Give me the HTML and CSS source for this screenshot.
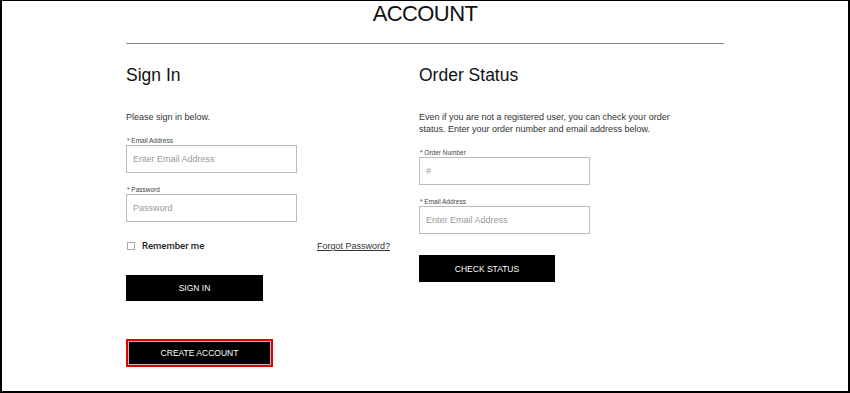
FILE: index.html
```html
<!DOCTYPE html>
<html lang="en">
  <head>
    <meta name="viewport" content="width=device-width, initial-scale=1.0" />
    <title>Account</title>
    <link rel="stylesheet" href="styles.css">
  </head>

  <body>
    <div class="page">
      <h1 class="title">ACCOUNT</h1>
      <div class="wrap">
        <hr class="rule" />
        <div class="columns">
          <!-- Sign in -->
          <div class="col sign-in">
            <h2>Sign In</h2>
            <p class="intro">Please sign in below.</p>
            <label class="field first">
              <span class="label">* Email Address</span>
              <input type="text" placeholder="Enter Email Address" />
            </label>
            <label class="field">
              <span class="label">* Password</span>
              <input type="password" placeholder="Password" />
            </label>
            <div class="remember-row">
              <span class="remember"><span class="box"></span>Remember me</span>
              <a href="#" class="forgot">Forgot Password?</a>
            </div>
            <button class="btn signin-btn">SIGN IN</button>
            <div class="create-outline">
              <button class="btn create-btn">CREATE ACCOUNT</button>
            </div>
          </div>

          <!-- Order status -->
          <div class="col order">
            <h2>Order Status</h2>
            <p class="intro">Even if you are not a registered user, you can check your order status. Enter your order number and email address below.</p>
            <label class="field first">
              <span class="label">* Order Number</span>
              <input type="text" placeholder="#" />
            </label>
            <label class="field">
              <span class="label">* Email Address</span>
              <input type="text" placeholder="Enter Email Address" />
            </label>
            <button class="btn check-btn">CHECK STATUS</button>
          </div>
        </div>
      </div>
    </div>
  </body>
</html>
```

FILE: styles.css
```css
* {
  padding: 0;
  margin: 0;
  box-sizing: border-box;
  font-family: "Liberation Sans", Arial, sans-serif;
}

body {
  background-color: #ffffff;
}

.page {
  width: 850px;
  height: 393px;
  border: 2px solid #000;
  border-top-width: 1px;
  overflow: hidden;
}

.title {
  font-size: 22px;
  line-height: 25px;
  font-weight: normal;
  text-align: center;
  color: #111;
  letter-spacing: -0.6px;
}

.wrap {
  width: 598px;
  margin-left: 124px;
}

.rule {
  border: none;
  height: 1px;
  background-color: #888;
  margin-top: 17px;
}

.columns {
  display: grid;
  grid-template-columns: 293px 1fr;
}

.col {
  display: flex;
  flex-direction: column;
  align-items: flex-start;
}

.col h2 {
  font-size: 17.5px;
  line-height: 22px;
  font-weight: normal;
  color: #111;
  margin-top: 20px;
}

.intro {
  font-size: 9px;
  line-height: 12px;
  color: #333;
  margin-top: 25px;
}

.order .intro {
  max-width: 270px;
}

.field {
  display: flex;
  flex-direction: column;
  margin-top: 11.5px;
}

.field.first {
  margin-top: 12.5px;
}

.label {
  font-size: 6.5px;
  line-height: 9px;
  color: #444;
  padding-left: 1px;
}

.field input {
  margin-top: 0.5px;
  width: 171px;
  height: 28px;
  border: 1px solid #bbb;
  padding: 0 6px;
  font-size: 9px;
  color: #333;
  outline: none;
}

.field input::placeholder {
  color: #999;
}

.remember-row {
  margin-top: 18px;
  width: 264px;
  display: flex;
  justify-content: space-between;
  align-items: center;
  font-size: 9px;
  line-height: 12px;
}

.remember {
  display: flex;
  align-items: center;
  color: #222;
  font-family: Roboto, "Liberation Sans", sans-serif;
  font-weight: 500;
  font-size: 9.5px;
}

.box {
  width: 8px;
  height: 8px;
  border: 1px solid #aaa;
  margin-left: 1px;
  margin-right: 7px;
}

.forgot {
  color: #333;
  text-decoration: underline;
}

.btn {
  background-color: #000;
  color: #fff;
  border: none;
  font-size: 8.5px;
  cursor: pointer;
}

.signin-btn {
  margin-top: 23px;
  width: 137px;
  height: 26px;
}

.create-outline {
  margin-top: 38px;
  border: 2px solid #e00000;
}

.create-btn {
  display: block;
  width: 143px;
  height: 24px;
  border: 1px solid #bbb;
}

.check-btn {
  margin-top: 21px;
  width: 136px;
  height: 27px;
}
```
